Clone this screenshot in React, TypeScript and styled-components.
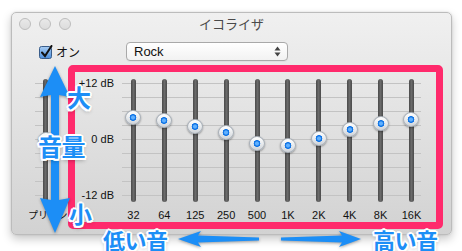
import styled, { createGlobalStyle } from "styled-components";

const GlobalStyle = createGlobalStyle`
  html, body {
    margin: 0;
    padding: 0;
    background: #ffffff;
  }
  body {
    font-family: "Liberation Sans", "Noto Sans CJK JP", sans-serif;
    color: #1a1a1a;
  }
`;

const BLUE = "#1c8ef6";

const Page = styled.div`
  position: relative;
  width: 462px;
  height: 251px;
  padding: 12px 0 0 11px;
  box-sizing: border-box;
  overflow: hidden;
`;

const Window = styled.div`
  width: 441px;
  height: 223px;
  box-sizing: border-box;
  border: 1px solid #bcbcbc;
  border-radius: 5px;
  background: linear-gradient(#f0f0f0, #e6e6e6 35%, #d2d2d2);
  box-shadow: 0 4px 10px rgba(0, 0, 0, 0.22), 0 0 2px rgba(0, 0, 0, 0.12);
  display: flex;
  flex-direction: column;
`;

const TitleBar = styled.div`
  height: 22px;
  display: grid;
  grid-template-columns: 1fr auto 1fr;
  align-items: center;
  padding: 0 7px;
`;

const Lights = styled.div`
  display: flex;
  gap: 8px;
`;

const Light = styled.span`
  width: 12px;
  height: 12px;
  box-sizing: border-box;
  border-radius: 50%;
  border: 1px solid #bdbdbd;
  background: linear-gradient(#e9e9e9, #dcdcdc);
`;

const Title = styled.div`
  font-family: "Noto Sans CJK JP", sans-serif;
  font-size: 13px;
  color: #4a4a4a;
  line-height: 16px;
`;

const Controls = styled.div`
  margin-top: 7px;
  height: 19px;
  display: flex;
  align-items: center;
  padding-left: 27px;
`;

const CheckLabel = styled.label`
  width: 87px;
  display: flex;
  align-items: center;
  gap: 3px;
  font-family: "Noto Sans CJK JP", sans-serif;
  font-size: 12px;
  color: #111;
`;

const Select = styled.div`
  width: 162px;
  height: 19px;
  box-sizing: border-box;
  border: 1px solid #a9a9a9;
  border-radius: 4px;
  background: linear-gradient(#ffffff, #f2f2f2);
  box-shadow: 0 1px 0 rgba(0, 0, 0, 0.04);
  display: flex;
  align-items: center;
  justify-content: space-between;
  padding: 0 6px 0 7px;
  font-size: 13px;
  color: #111;
`;

const EqRow = styled.div`
  margin-top: 4px;
  display: flex;
`;

const Preamp = styled.div`
  width: 56px;
  padding-top: 13px;
  display: flex;
  flex-direction: column;
`;

const SliderSlot = styled.div<{ $lineX: number; $lineW: number }>`
  position: relative;
  height: 126px;
  background-image: repeating-linear-gradient(
    to bottom,
    #c3c3c3 0 1px,
    transparent 1px 14px
  );
  background-size: ${({ $lineW }) => $lineW}px 113px;
  background-position: ${({ $lineX }) => $lineX}px 5px;
  background-repeat: no-repeat;
`;

const Track = styled.div<{ $left?: number }>`
  position: absolute;
  top: 1px;
  left: ${({ $left }) => ($left === undefined ? "calc(50% - 2.5px)" : `${$left}px`)};
  width: 5px;
  height: 123px;
  border-radius: 3px;
  background: linear-gradient(to right, #4a4a4a, #6a6a6a 50%, #4a4a4a);
`;

const Knob = styled.div<{ $left?: number }>`
  position: absolute;
  left: ${({ $left }) => ($left === undefined ? "calc(50% - 8px)" : `${$left}px`)};
  width: 16px;
  height: 15px;
  box-sizing: border-box;
  border-radius: 50%;
  border: 1px solid #a9b0b8;
  background: radial-gradient(circle at 50% 50%, #5fb0ff 0 1.5px, #1577e6 2.5px 3.2px, transparent 3.6px),
    linear-gradient(#ffffff, #e4e7ea 60%, #cfd3d8);
  box-shadow: 0 1px 2px rgba(0, 0, 0, 0.35);
`;

const PreampLabel = styled.div`
  margin-top: 5px;
  padding-left: 16px;
  font-family: "Noto Sans CJK JP", sans-serif;
  font-size: 10px;
  line-height: 12px;
  white-space: nowrap;
  color: #111;
`;

const Frame = styled.div`
  width: 375px;
  height: 164px;
  box-sizing: border-box;
  border: 7px solid #ff2a6c;
  border-radius: 5px;
  padding-top: 6px;
  display: flex;
  align-items: flex-start;
`;

const Scale = styled.div`
  width: 39px;
  height: 124px;
  margin-top: -1px;
  display: flex;
  flex-direction: column;
  justify-content: space-between;
  text-align: right;
  font-size: 11px;
  line-height: 12px;
  color: #111;
  white-space: nowrap;
`;

const Bands = styled.div`
  margin-left: 4px;
  display: flex;
  position: relative;
`;

const BandLines = styled.div`
  position: absolute;
  left: 4px;
  top: 5px;
  width: 299px;
  height: 113px;
  background-image: repeating-linear-gradient(
    to bottom,
    #c3c3c3 0 1px,
    transparent 1px 14px
  );
`;

const Band = styled.div`
  width: 30.9px;
  display: flex;
  flex-direction: column;
  align-items: stretch;
`;

const BandSlot = styled.div`
  position: relative;
  height: 126px;
`;

const FreqLabel = styled.div`
  margin-top: 5px;
  text-align: center;
  font-size: 11px;
  line-height: 12px;
  color: #111;
`;

const Note = styled.div<{ $x: number; $y: number; $size: number }>`
  position: absolute;
  left: ${({ $x }) => $x}px;
  top: ${({ $y }) => $y}px;
  font-family: "Noto Sans CJK JP", sans-serif;
  font-weight: 700;
  font-size: ${({ $size }) => $size}px;
  line-height: 1;
  color: ${BLUE};
  white-space: nowrap;
  letter-spacing: -0.5px;
  text-shadow: 2px 0 0 #fff, -2px 0 0 #fff, 0 2px 0 #fff, 0 -2px 0 #fff,
    1.5px 1.5px 0 #fff, -1.5px 1.5px 0 #fff, 1.5px -1.5px 0 #fff,
    -1.5px -1.5px 0 #fff, 0 2px 4px rgba(0, 0, 0, 0.45);
`;

const Arrow = styled.svg<{ $x: number; $y: number }>`
  position: absolute;
  left: ${({ $x }) => $x}px;
  top: ${({ $y }) => $y}px;
  overflow: visible;
  filter: drop-shadow(0 1px 1.5px rgba(0, 0, 0, 0.35));
`;

const bands: [string, number][] = [
  ["32", 4.7],
  ["64", 3.9],
  ["125", 2.6],
  ["250", 1.5],
  ["500", -0.9],
  ["1K", -1.3],
  ["2K", 0.2],
  ["4K", 2.1],
  ["8K", 3.4],
  ["16K", 4.1],
];

// knob center inside the 126px slot: +12 dB at 5, 0 dB at 61, -12 dB at 117
const knobTop = (db: number) => 61 - (db * 56) / 12 - 7.5;

function CheckBox() {
  return (
    <svg width="14" height="14" viewBox="0 0 14 14">
      <defs>
        <linearGradient id="cb" x1="0" y1="0" x2="0" y2="1">
          <stop offset="0" stopColor="#a9cdf3" />
          <stop offset="1" stopColor="#4d8fdc" />
        </linearGradient>
      </defs>
      <rect x="0.5" y="1.5" width="12" height="12" rx="2" fill="url(#cb)" stroke="#3a5d8a" />
      <path d="M3 7.5 L6 11 L12.5 1" fill="none" stroke="#111" strokeWidth="2" strokeLinecap="round" />
    </svg>
  );
}

function UpDown() {
  return (
    <svg width="7" height="11" viewBox="0 0 7 11">
      <path d="M3.5 0.5 L6.5 4.5 L0.5 4.5 Z" fill="#444" />
      <path d="M3.5 10.5 L6.5 6.5 L0.5 6.5 Z" fill="#444" />
    </svg>
  );
}

export default function App() {
  return (
    <>
      <GlobalStyle />
      <Page>
        <Window>
          <TitleBar>
            <Lights>
              <Light />
              <Light />
              <Light />
            </Lights>
            <Title>イコライザ</Title>
            <span />
          </TitleBar>

          <Controls>
            <CheckLabel>
              <CheckBox />
              オン
            </CheckLabel>
            <Select>
              <span>Rock</span>
              <UpDown />
            </Select>
          </Controls>

          <EqRow>
            <Preamp>
              <SliderSlot $lineX={23} $lineW={10}>
                <Track $left={31} />
                <Knob $left={25.5} style={{ top: knobTop(0) }} />
              </SliderSlot>
              <PreampLabel>プリアンプ</PreampLabel>
            </Preamp>

            <Frame>
              <Scale>
                <span>+12 dB</span>
                <span>0 dB</span>
                <span>-12 dB</span>
              </Scale>
              <Bands>
                <BandLines />
                {bands.map(([label, db]) => (
                  <Band key={label}>
                    <BandSlot>
                      <Track />
                      <Knob style={{ top: knobTop(db) }} />
                    </BandSlot>
                    <FreqLabel>{label}</FreqLabel>
                  </Band>
                ))}
              </Bands>
            </Frame>
          </EqRow>
        </Window>

        {/* annotations drawn over the screenshot */}
        <Arrow $x={38} $y={64} width="34" height="172" viewBox="0 0 34 172">
          <polygon
            fill={BLUE}
            points="17,2 32,33 21,31 21,136 32,134 17,169 2,134 13,136 13,31 2,33"
          />
        </Arrow>
        <Arrow $x={176} $y={228} width="86" height="22" viewBox="0 0 86 22">
          <polygon fill={BLUE} points="2,11 25,3 22,7.5 83,9.5 83,12.5 22,14.5 25,19" />
        </Arrow>
        <Arrow $x={278} $y={228} width="86" height="22" viewBox="0 0 86 22">
          <polygon fill={BLUE} points="3,9.5 64,7.5 61,3 83,11 61,19 64,14.5 3,12.5" />
        </Arrow>

        <Note $x={67} $y={85} $size={24}>大</Note>
        <Note $x={38} $y={134} $size={24}>音量</Note>
        <Note $x={69} $y={202} $size={23}>小</Note>
        <Note $x={103} $y={228} $size={22}>低い音</Note>
        <Note $x={373} $y={228} $size={22}>高い音</Note>
      </Page>
    </>
  );
}
